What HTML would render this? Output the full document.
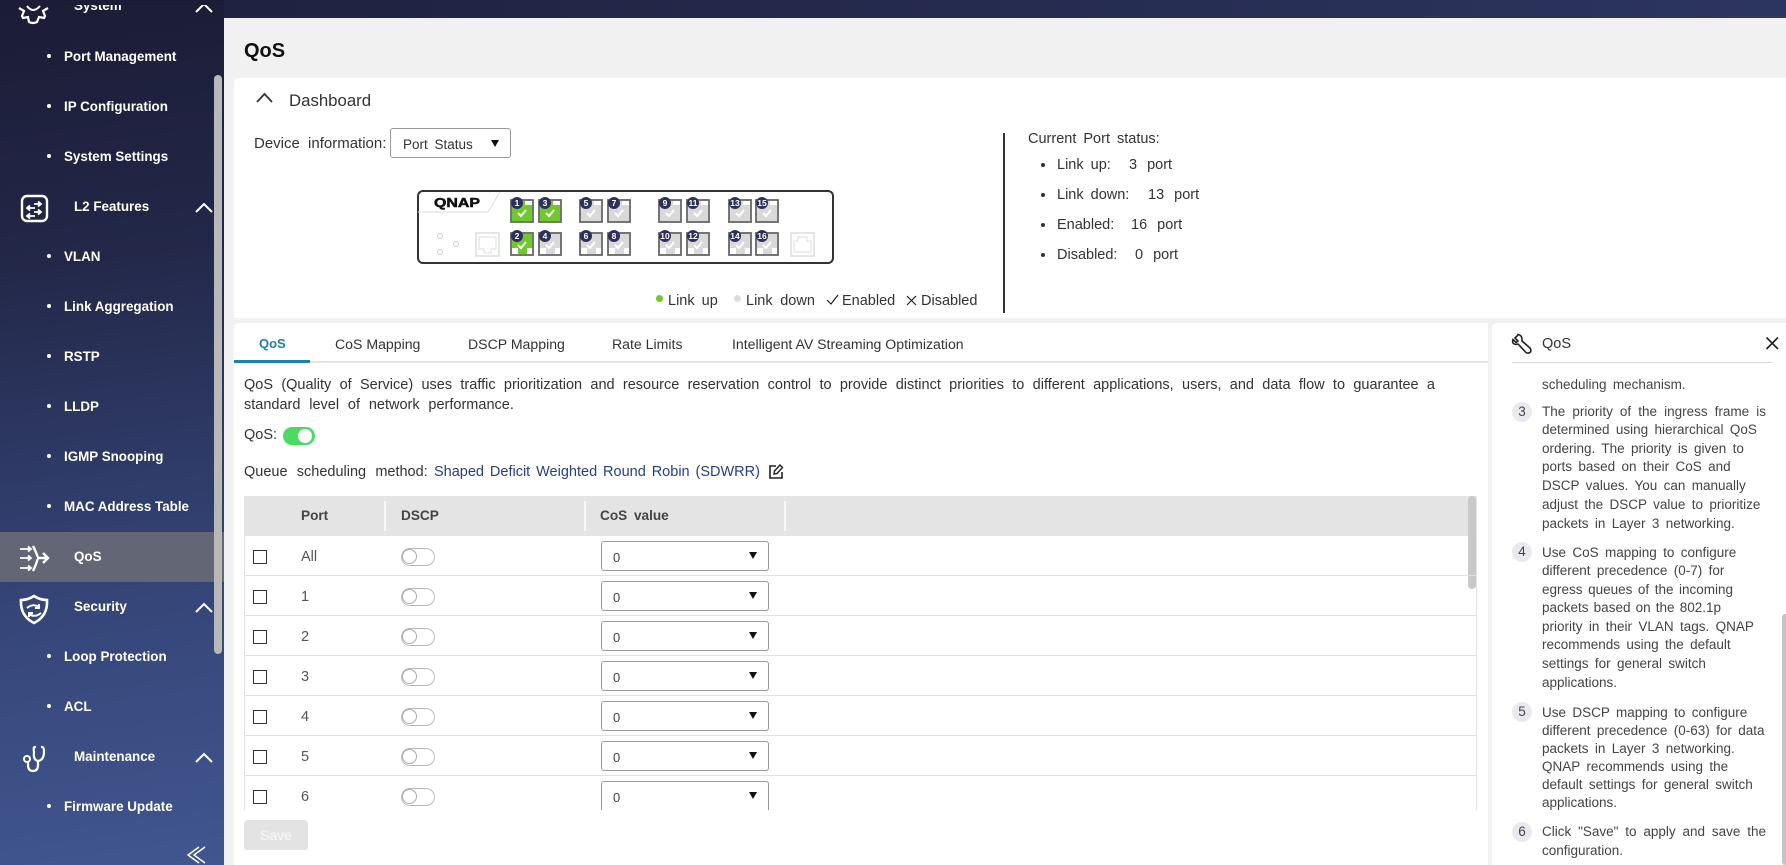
<!DOCTYPE html>
<html lang="en"><head><meta charset="utf-8"><title>QoS</title>
<style>
html,body{margin:0;padding:0;width:1786px;height:865px;overflow:hidden;background:#f1f1f1}
body{position:relative;font-family:"Liberation Sans",sans-serif;color:#333;font-size:14.5px}
.a{position:absolute}
.t{position:absolute;white-space:nowrap;line-height:20px;height:20px;word-spacing:3px;margin-top:1px}
.s{position:absolute;white-space:nowrap;line-height:20px;height:20px;color:#fff;font-weight:bold;font-size:13.4px;margin-top:1px}
.b{position:absolute;left:47px;width:4px;height:4px;border-radius:50%;background:#fff}
.sel{position:absolute;box-sizing:border-box;background:#fff;border:1px solid #999;border-radius:3px}
.arr{position:absolute;width:0;height:0;border-left:4px solid transparent;border-right:4px solid transparent;border-top:7px solid #111}
.cb{position:absolute;left:253px;width:14px;height:14px;box-sizing:border-box;border:1.6px solid #333;background:#fff}
.tg{position:absolute;left:401px;width:34px;height:18px;box-sizing:border-box;border:1.5px solid #bbb;border-radius:9px;background:#fff}
.tg i{position:absolute;left:0;top:0;width:15px;height:15px;box-sizing:border-box;border:1.5px solid #aaa;border-radius:50%;background:#fff}
.ln{position:absolute;left:245px;width:1232px;height:1px;background:#e2e2e2}
.h{position:absolute;left:1542px;white-space:nowrap;line-height:18px;height:18px;font-size:13.5px;color:#444;word-spacing:2.6px;margin-top:1px}
.n{position:absolute;left:1512px;width:20px;height:20px;border-radius:50%;background:#e9e9ef;text-align:center;line-height:20px;font-size:13.5px;color:#444}
.z{font-size:13px;color:#444}
.th{font-weight:bold;font-size:13.6px;color:#444}
.tb{font-size:14.1px;word-spacing:0}
</style></head><body>

<!-- top bar + sidebar -->
<div class="a" style="left:0;top:0;width:1786px;height:18px;background:linear-gradient(90deg,#1d1f3b 0%,#2c3560 100%)"></div>
<div class="a" style="left:0;top:0;width:224px;height:865px;background:linear-gradient(172deg,#1b1c35 0%,#232849 30%,#354578 68%,#41568f 100%)"></div>
<div class="a" style="left:0;top:532px;width:224px;height:50px;background:#636675"></div>
<div class="a" style="left:214px;top:75px;width:8px;height:579px;border-radius:4px;background:#b8b8b8"></div>

<div class="s" style="left:74px;top:-5px">System</div>
<div class="s" style="left:64px;top:46px">Port Management</div><div class="b" style="top:54px"></div>
<div class="s" style="left:64px;top:96px">IP Configuration</div><div class="b" style="top:104px"></div>
<div class="s" style="left:64px;top:146px">System Settings</div><div class="b" style="top:154px"></div>
<div class="s" style="left:74px;top:196px">L2 Features</div>
<div class="s" style="left:64px;top:246px">VLAN</div><div class="b" style="top:254px"></div>
<div class="s" style="left:64px;top:296px">Link Aggregation</div><div class="b" style="top:304px"></div>
<div class="s" style="left:64px;top:346px">RSTP</div><div class="b" style="top:354px"></div>
<div class="s" style="left:64px;top:396px">LLDP</div><div class="b" style="top:404px"></div>
<div class="s" style="left:64px;top:446px">IGMP Snooping</div><div class="b" style="top:454px"></div>
<div class="s" style="left:64px;top:496px">MAC Address Table</div><div class="b" style="top:504px"></div>
<div class="s" style="left:74px;top:546px">QoS</div>
<div class="s" style="left:74px;top:596px">Security</div>
<div class="s" style="left:64px;top:646px">Loop Protection</div><div class="b" style="top:654px"></div>
<div class="s" style="left:64px;top:696px">ACL</div><div class="b" style="top:704px"></div>
<div class="s" style="left:74px;top:746px">Maintenance</div>
<div class="s" style="left:64px;top:796px">Firmware Update</div><div class="b" style="top:804px"></div>

<svg class="a" style="left:0;top:0" width="224" height="865" fill="none" stroke="#fff" stroke-width="2">
<!-- chevrons -->
<path d="M196 12 L204 4 L212 12M196 212 L204 204 L212 212M196 612 L204 604 L212 612M196 762 L204 754 L212 762"/>
<path d="M199 847 L188 855 L199 863M205 847 L194 855 L205 863" stroke-width="1.5"/>
<!-- gear -->
<path d="M19 8 L24 11 L22 16 L23 18 L28 17 L29 22 Q33 24 37 22 L39 17 L44 18 L45 16 L43 11 L48 8" stroke-width="2.2"/>
<path d="M27 6 Q33 14 40 6" stroke-width="2"/>
<!-- L2 features -->
<rect x="22" y="196" width="25" height="25" rx="5" stroke-width="2.4"/>
<path d="M34 204 H41 M38 201.500 L41 204 L38 206.500 M27 208 H35 M30 205.500 L27 208 L30 210.500 M34 212 H41 M38 209.500 L41 212 L38 214.500 M27 216 H35 M30 213.500 L27 216 L30 218.500" stroke-width="1.8"/>
<!-- QoS -->
<path d="M20 549 H31 M28 546.500 L31 549 L28 551.500 M20 558 H31 M28 555.500 L31 558 L28 560.500 M20 568 H31 M28 565.500 L31 568 L28 570.500" stroke-width="1.8"/>
<path d="M33 546 Q39 558 37 558 Q39 558 33 571 M37 558 H47 M43 553 L48 558 L43 563" stroke-width="2.4"/>
<!-- shield -->
<path d="M21 600 Q28 600 34 596 Q40 600 47 600 Q48 616 34 623 Q20 616 21 600Z" stroke-width="2.6"/>
<path d="M27 608 Q33 603 39 607 M39 604 V608 H35 M41 613 Q35 618 29 614 M29 617 V613 H33" stroke-width="2"/>
<!-- stethoscope -->
<path d="M36 747 H35 Q33 747 34 752 Q33 760 38 761 Q44 760 44 752 Q44 747 42 747 H41" stroke-width="2.2"/>
<path d="M38 761 V765 Q38 771 33 771 Q28 771 28 765 V762" stroke-width="2.2"/>
<circle cx="27" cy="759" r="3" stroke-width="2"/>
</svg>
<div class="a" style="left:0;top:0;width:224px;height:5px;background:#1b1c35"></div>

<!-- main panel -->
<div class="a" style="left:224px;top:18px;width:1562px;height:847px;background:#f1f1f1;border-top-left-radius:10px"></div>
<div class="a" style="left:244px;top:39px;font-size:20px;font-weight:bold;line-height:24px;color:#111">QoS</div>

<!-- dashboard -->
<div class="a" style="left:234px;top:78px;width:1552px;height:240px;background:#fff;border-top-left-radius:5px"></div>
<svg class="a" style="left:256px;top:91px" width="18" height="14" fill="none" stroke="#333" stroke-width="1.8"><path d="M1 11 L8.500 3 L16 11"/></svg>
<div class="t" style="left:289px;top:90px;font-size:16.8px;word-spacing:0">Dashboard</div>
<div class="t" style="left:254px;top:133px;font-size:15px;word-spacing:4px">Device information:</div>
<div class="sel" style="left:390px;top:128px;width:121px;height:30px"></div>
<div class="t" style="left:403px;top:134px;font-size:13.5px">Port Status</div>
<div class="arr" style="left:491px;top:140px"></div>

<svg class="a" style="left:410px;top:185px" width="440" height="85" viewBox="410 185 440 85">
<defs>
<path id="pt" d="M2 8 H7 V2 H15 V6 H22 V22 H2Z"/>
<path id="pb" d="M2 2 H22 V16 H17 V22 H8 V16 H2Z"/>
<g id="chk"><path d="M8 14 L11 17 L16 11" fill="none" stroke="#fff" stroke-width="2"/></g>
<rect id="bx" x="1" y="1" width="22" height="22" fill="none" stroke="#666" stroke-width="1.800"/>
</defs>
<rect x="418" y="191" width="415" height="72" rx="5" fill="#fff" stroke="#333" stroke-width="2"/>
<path d="M418 212 H488 L500 192" fill="none" stroke="#ddd" stroke-width="1"/>
<text x="434" y="207" font-family="Liberation Sans,sans-serif" font-size="13" font-weight="bold" fill="#111" stroke="#111" stroke-width=".5" textLength="46" lengthAdjust="spacingAndGlyphs">QNAP</text>
<g fill="none" stroke="#ccc" stroke-width="1"><circle cx="440" cy="236" r="2.500"/><circle cx="456" cy="244" r="2.500"/><circle cx="440" cy="252" r="2.500"/>
<rect x="476" y="233" width="23" height="23" stroke-width="1.500" stroke="#ddd"/><path d="M479 237 H496 V249 H491 V253 H484 V249 H479Z" stroke="#ddd"/>
<rect x="791" y="233" width="23" height="23" stroke-width="1.500" stroke="#ddd"/><path d="M794 252 H811 V241 H807 V237 H798 V241 H794Z" stroke="#ddd"/></g>

<g font-family="Liberation Sans,sans-serif" font-size="8.500" font-weight="bold" text-anchor="middle">
<g transform="translate(510 199)"><use href="#pt" fill="#6fc92b"/><use href="#chk"/><use href="#bx"/><circle cx="7" cy="4" r="6" fill="#2b3159"/><text x="7" y="7" fill="#fff">1</text></g>
<g transform="translate(538 199)"><use href="#pt" fill="#6fc92b"/><use href="#chk"/><use href="#bx"/><circle cx="7" cy="4" r="6" fill="#2b3159"/><text x="7" y="7" fill="#fff">3</text></g>
<g transform="translate(579 199)"><use href="#pt" fill="#d9d9d9"/><use href="#chk"/><use href="#bx"/><circle cx="7" cy="4" r="6" fill="#2b3159"/><text x="7" y="7" fill="#fff">5</text></g>
<g transform="translate(607 199)"><use href="#pt" fill="#d9d9d9"/><use href="#chk"/><use href="#bx"/><circle cx="7" cy="4" r="6" fill="#2b3159"/><text x="7" y="7" fill="#fff">7</text></g>
<g transform="translate(658 199)"><use href="#pt" fill="#d9d9d9"/><use href="#chk"/><use href="#bx"/><circle cx="7" cy="4" r="6" fill="#2b3159"/><text x="7" y="7" fill="#fff">9</text></g>
<g transform="translate(686 199)"><use href="#pt" fill="#d9d9d9"/><use href="#chk"/><use href="#bx"/><circle cx="7" cy="4" r="6" fill="#2b3159"/><text x="7" y="7" fill="#fff">11</text></g>
<g transform="translate(728 199)"><use href="#pt" fill="#d9d9d9"/><use href="#chk"/><use href="#bx"/><circle cx="7" cy="4" r="6" fill="#2b3159"/><text x="7" y="7" fill="#fff">13</text></g>
<g transform="translate(755 199)"><use href="#pt" fill="#d9d9d9"/><use href="#chk"/><use href="#bx"/><circle cx="7" cy="4" r="6" fill="#2b3159"/><text x="7" y="7" fill="#fff">15</text></g>
<g transform="translate(510 232)"><use href="#pb" fill="#6fc92b"/><use href="#chk" y="-1"/><use href="#bx"/><circle cx="7" cy="4" r="6" fill="#2b3159"/><text x="7" y="7" fill="#fff">2</text></g>
<g transform="translate(538 232)"><use href="#pb" fill="#d9d9d9"/><use href="#chk" y="-1"/><use href="#bx"/><circle cx="7" cy="4" r="6" fill="#2b3159"/><text x="7" y="7" fill="#fff">4</text></g>
<g transform="translate(579 232)"><use href="#pb" fill="#d9d9d9"/><use href="#chk" y="-1"/><use href="#bx"/><circle cx="7" cy="4" r="6" fill="#2b3159"/><text x="7" y="7" fill="#fff">6</text></g>
<g transform="translate(607 232)"><use href="#pb" fill="#d9d9d9"/><use href="#chk" y="-1"/><use href="#bx"/><circle cx="7" cy="4" r="6" fill="#2b3159"/><text x="7" y="7" fill="#fff">8</text></g>
<g transform="translate(658 232)"><use href="#pb" fill="#d9d9d9"/><use href="#chk" y="-1"/><use href="#bx"/><circle cx="7" cy="4" r="6" fill="#2b3159"/><text x="7" y="7" fill="#fff">10</text></g>
<g transform="translate(686 232)"><use href="#pb" fill="#d9d9d9"/><use href="#chk" y="-1"/><use href="#bx"/><circle cx="7" cy="4" r="6" fill="#2b3159"/><text x="7" y="7" fill="#fff">12</text></g>
<g transform="translate(728 232)"><use href="#pb" fill="#d9d9d9"/><use href="#chk" y="-1"/><use href="#bx"/><circle cx="7" cy="4" r="6" fill="#2b3159"/><text x="7" y="7" fill="#fff">14</text></g>
<g transform="translate(755 232)"><use href="#pb" fill="#d9d9d9"/><use href="#chk" y="-1"/><use href="#bx"/><circle cx="7" cy="4" r="6" fill="#2b3159"/><text x="7" y="7" fill="#fff">16</text></g>
</g>
</svg>

<!-- legend -->
<div class="a" style="left:656px;top:295px;width:7px;height:7px;border-radius:50%;background:#72c92d"></div>
<div class="t" style="left:668px;top:290px">Link up</div>
<div class="a" style="left:734px;top:295px;width:7px;height:7px;border-radius:50%;background:#dcdcdc"></div>
<div class="t" style="left:746px;top:290px;word-spacing:3.6px">Link down</div>
<svg class="a" style="left:826px;top:294px" width="14" height="12" fill="none" stroke="#222" stroke-width="1.200"><path d="M1 6 L5 10 L12 1"/></svg>
<div class="t" style="left:842px;top:290px">Enabled</div>
<svg class="a" style="left:906px;top:295px" width="12" height="12" fill="none" stroke="#222" stroke-width="1.200"><path d="M1 1 L10 10 M10 1 L1 10"/></svg>
<div class="t" style="left:921px;top:290px">Disabled</div>

<div class="a" style="left:1003px;top:133px;width:2px;height:180px;background:#333"></div>
<div class="t" style="left:1028px;top:128px">Current Port status:</div>
<div class="a" style="left:1041px;top:163px;width:4px;height:4px;border-radius:50%;background:#333"></div>
<div class="t" style="left:1057px;top:154px">Link up:</div><div class="t" style="left:1129px;top:154px;word-spacing:6px">3 port</div>
<div class="a" style="left:1041px;top:193px;width:4px;height:4px;border-radius:50%;background:#333"></div>
<div class="t" style="left:1057px;top:184px">Link down:</div><div class="t" style="left:1148px;top:184px;word-spacing:6px">13 port</div>
<div class="a" style="left:1041px;top:223px;width:4px;height:4px;border-radius:50%;background:#333"></div>
<div class="t" style="left:1057px;top:214px">Enabled:</div><div class="t" style="left:1131px;top:214px;word-spacing:6px">16 port</div>
<div class="a" style="left:1041px;top:253px;width:4px;height:4px;border-radius:50%;background:#333"></div>
<div class="t" style="left:1057px;top:244px">Disabled:</div><div class="t" style="left:1135px;top:244px;word-spacing:6px">0 port</div>

<!-- left bottom panel -->
<div class="a" style="left:234px;top:323px;width:1254px;height:542px;background:#fff;border-top-left-radius:4px"></div>
<div class="a" style="left:234px;top:361px;width:1254px;height:2px;background:#e4e4e4"></div>
<div class="a" style="left:234px;top:360px;width:76px;height:3px;background:#1c7fb0"></div>
<div class="t" style="left:259px;top:333px;color:#1c7fb0;font-weight:bold;font-size:13px;word-spacing:0">QoS</div>
<div class="t tb" style="left:335px;top:333px">CoS Mapping</div>
<div class="t tb" style="left:468px;top:333px">DSCP Mapping</div>
<div class="t tb" style="left:612px;top:333px">Rate Limits</div>
<div class="t tb" style="left:732px;top:333px">Intelligent AV Streaming Optimization</div>

<div class="t" style="left:244px;top:374px;width:1191px;text-align:justify;text-align-last:justify;word-spacing:0">QoS (Quality of Service) uses traffic prioritization and resource reservation control to provide distinct priorities to different applications, users, and data flow to guarantee a</div>
<div class="t" style="left:244px;top:394px;word-spacing:4.8px">standard level of network performance.</div>
<div class="t" style="left:244px;top:424px">QoS:</div>
<div class="a" style="left:283px;top:427px;width:32px;height:18px;border-radius:9px;background:#4cd964"></div>
<div class="a" style="left:298px;top:429px;width:14px;height:14px;border-radius:50%;background:#fff"></div>
<div class="t" style="left:244px;top:461px;word-spacing:5.2px">Queue scheduling method:</div>
<div class="t" style="left:434px;top:461px;color:#23408f;word-spacing:1.9px">Shaped Deficit Weighted Round Robin (SDWRR)</div>
<svg class="a" style="left:768px;top:463px" width="16" height="17" fill="none" stroke="#222" stroke-width="1.600"><path d="M8 3 H2 V15 H14 V9"/><path d="M6 11 L6.500 8 L12 2 L14.500 4.500 L9 10.500Z" stroke-width="1.400"/></svg>

<!-- table -->
<div class="a" style="left:244px;top:496px;width:1233px;height:40px;background:#e4e4e4"></div>
<div class="a" style="left:384px;top:501px;width:2px;height:30px;background:#f6f6f6"></div>
<div class="a" style="left:584px;top:501px;width:2px;height:30px;background:#f6f6f6"></div>
<div class="a" style="left:784px;top:501px;width:2px;height:30px;background:#f6f6f6"></div>
<div class="t th" style="left:301px;top:505px">Port</div>
<div class="t th" style="left:401px;top:505px">DSCP</div>
<div class="t th" style="left:600px;top:505px">CoS value</div>
<div class="a" style="left:244px;top:536px;width:1px;height:274px;background:#e2e2e2"></div>
<div class="a" style="left:1476px;top:536px;width:1px;height:274px;background:#e2e2e2"></div>
<div class="a" style="left:1468px;top:496px;width:8px;height:93px;border-radius:4px;background:#c8c8c8"></div>

<div class="ln" style="top:575px"></div><div class="ln" style="top:615px"></div><div class="ln" style="top:655px"></div><div class="ln" style="top:695px"></div><div class="ln" style="top:735px"></div><div class="ln" style="top:775px"></div>

<div class="cb" style="top:550px"></div><div class="t" style="left:301px;top:546px;color:#555">All</div><div class="tg" style="top:548px"><i></i></div><div class="sel" style="left:601px;top:541px;width:168px;height:30px"></div><div class="t z" style="left:613px;top:547px">0</div><div class="arr" style="left:749px;top:552px"></div>
<div class="cb" style="top:590px"></div><div class="t" style="left:301px;top:586px;color:#555">1</div><div class="tg" style="top:588px"><i></i></div><div class="sel" style="left:601px;top:581px;width:168px;height:30px"></div><div class="t z" style="left:613px;top:587px">0</div><div class="arr" style="left:749px;top:592px"></div>
<div class="cb" style="top:630px"></div><div class="t" style="left:301px;top:626px;color:#555">2</div><div class="tg" style="top:628px"><i></i></div><div class="sel" style="left:601px;top:621px;width:168px;height:30px"></div><div class="t z" style="left:613px;top:627px">0</div><div class="arr" style="left:749px;top:632px"></div>
<div class="cb" style="top:670px"></div><div class="t" style="left:301px;top:666px;color:#555">3</div><div class="tg" style="top:668px"><i></i></div><div class="sel" style="left:601px;top:661px;width:168px;height:30px"></div><div class="t z" style="left:613px;top:667px">0</div><div class="arr" style="left:749px;top:672px"></div>
<div class="cb" style="top:710px"></div><div class="t" style="left:301px;top:706px;color:#555">4</div><div class="tg" style="top:708px"><i></i></div><div class="sel" style="left:601px;top:701px;width:168px;height:30px"></div><div class="t z" style="left:613px;top:707px">0</div><div class="arr" style="left:749px;top:712px"></div>
<div class="cb" style="top:750px"></div><div class="t" style="left:301px;top:746px;color:#555">5</div><div class="tg" style="top:748px"><i></i></div><div class="sel" style="left:601px;top:741px;width:168px;height:30px"></div><div class="t z" style="left:613px;top:747px">0</div><div class="arr" style="left:749px;top:752px"></div>
<div class="cb" style="top:790px"></div><div class="t" style="left:301px;top:786px;color:#555">6</div><div class="tg" style="top:788px"><i></i></div><div class="sel" style="left:601px;top:781px;width:168px;height:29px;border-bottom:0;border-radius:3px 3px 0 0"></div><div class="t z" style="left:613px;top:787px">0</div><div class="arr" style="left:749px;top:792px"></div>

<div class="a" style="left:244px;top:820px;width:64px;height:30px;border-radius:3px;background:#e3e3e3;color:#f8f8f8;text-align:center;line-height:30px;font-size:14px">Save</div>

<!-- help panel -->
<div class="a" style="left:1492px;top:323px;width:294px;height:542px;background:#fff;border-top-left-radius:5px"></div>
<svg class="a" style="left:1511px;top:333px" width="22" height="22" fill="none" stroke="#222" stroke-width="1.600"><path d="M7 2 L4 5 L7 8 L5 9.500 L2 6.500 Q0.500 11 5 11.500 L7 11 L15 19.500 Q17.500 21 19.500 19 Q20.500 17 19 15 L11 8 Q11.500 2 7 1.500Z"/></svg>
<div class="t" style="left:1542px;top:333px;word-spacing:0">QoS</div>
<svg class="a" style="left:1765px;top:336px" width="15" height="15" fill="none" stroke="#222" stroke-width="1.600"><path d="M1.500 1.500 L13 13 M13 1.500 L1.500 13"/></svg>
<div class="a" style="left:1512px;top:362px;width:260px;height:1px;background:#d8d8d8"></div>

<div class="h" style="top:375px">scheduling mechanism.</div>
<div class="n" style="top:402px">3</div>
<div class="h" style="top:402px;width:224px;text-align:justify;text-align-last:justify;word-spacing:0">The priority of the ingress frame is</div>
<div class="h" style="top:420px">determined using hierarchical QoS</div>
<div class="h" style="top:439px">ordering. The priority is given to</div>
<div class="h" style="top:457px">ports based on their CoS and</div>
<div class="h" style="top:476px">DSCP values. You can manually</div>
<div class="h" style="top:495px">adjust the DSCP value to prioritize</div>
<div class="h" style="top:514px">packets in Layer 3 networking.</div>
<div class="n" style="top:542px">4</div>
<div class="h" style="top:543px">Use CoS mapping to configure</div>
<div class="h" style="top:561px">different precedence (0-7) for</div>
<div class="h" style="top:580px;word-spacing:1.8px">egress queues of the incoming</div>
<div class="h" style="top:598px;word-spacing:1.4px">packets based on the 802.1p</div>
<div class="h" style="top:617px">priority in their VLAN tags. QNAP</div>
<div class="h" style="top:635px">recommends using the default</div>
<div class="h" style="top:654px">settings for general switch</div>
<div class="h" style="top:673px">applications.</div>
<div class="n" style="top:702px">5</div>
<div class="h" style="top:703px">Use DSCP mapping to configure</div>
<div class="h" style="top:721px">different precedence (0-63) for data</div>
<div class="h" style="top:739px">packets in Layer 3 networking.</div>
<div class="h" style="top:757px">QNAP recommends using the</div>
<div class="h" style="top:775px">default settings for general switch</div>
<div class="h" style="top:793px">applications.</div>
<div class="n" style="top:822px">6</div>
<div class="h" style="top:822px;width:224px;text-align:justify;text-align-last:justify;word-spacing:0">Click "Save" to apply and save the</div>
<div class="h" style="top:841px">configuration.</div>
<div class="a" style="left:1782px;top:614px;width:4px;height:251px;border-radius:3px 0 0 3px;background:#c4c4c4"></div>
</body></html>
